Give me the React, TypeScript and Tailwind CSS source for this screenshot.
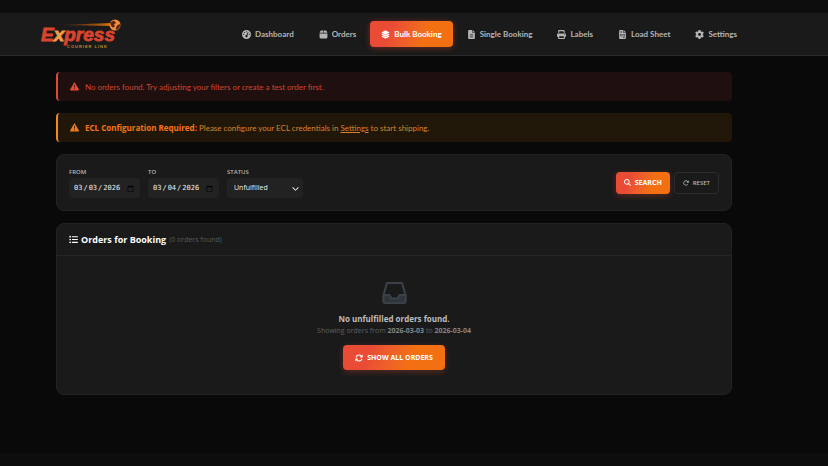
import React, { useState } from 'react';
import {
    FaGaugeHigh, FaBox, FaLayerGroup, FaFileLines, FaPrint, FaFileInvoice, FaGear, FaTriangleExclamation,
    FaMagnifyingGlass, FaRotateRight, FaListUl, FaArrowsRotate, FaChevronDown
} from 'react-icons/fa6';

const navItems = [
    { label: 'Dashboard', icon: FaGaugeHigh },
    { label: 'Orders', icon: FaBox },
    { label: 'Bulk Booking', icon: FaLayerGroup },
    { label: 'Single Booking', icon: FaFileLines },
    { label: 'Labels', icon: FaPrint },
    { label: 'Load Sheet', icon: FaFileInvoice },
    { label: 'Settings', icon: FaGear },
];

const Logo: React.FC = () => (
    <svg width="84" height="32" viewBox="0 0 84 32" role="img" aria-label="Express Courier Link">
        <defs>
            <linearGradient id="trail" x1="0" x2="1" y1="0" y2="0">
                <stop offset="0" stopColor="#c2410c" stopOpacity="0" />
                <stop offset="1" stopColor="#d97706" />
            </linearGradient>
        </defs>
        <path d="M16 7 L72 5 L72 8 Z" fill="url(#trail)" />
        <text x="1" y="23" fontSize="19" fontWeight="700" fontStyle="italic" fill="#d9442e" stroke="#d9442e" strokeWidth="0.8" fontFamily="'Liberation Sans', sans-serif">
            E<tspan fill="#f59a45" stroke="#f59a45">x</tspan>press
        </text>
        <circle cx="75" cy="7" r="5.5" fill="#f08c3a" />
        <path d="M70 4.5 L74 2.5 L76 5 L74 6.5 L75 8.5 L72.5 9.5 L71 7.5 Z M77.5 7 L80.5 6 L79.5 9.5 L77 12 L75.5 10.5 Z" fill="#5a2410" />
        <text x="27" y="30" fontSize="4" fontWeight="700" letterSpacing="1" fill="#c98a2b" fontFamily="'Liberation Sans', sans-serif">COURIER LINK</text>
    </svg>
);

const EmptyTray: React.FC = () => (
    <svg width="25" height="25" viewBox="0 0 25 25" fill="none" stroke="#3b4148" strokeWidth="2" strokeLinejoin="round" aria-hidden="true">
        <path d="M5 3 H20 L23.5 15 V21 Q23.5 23 21.5 23 H3.5 Q1.5 23 1.5 21 V15 Z" />
        <path d="M1.5 15 H7.5 L9.5 18.5 H15.5 L17.5 15 H23.5 V21 Q23.5 23 21.5 23 H3.5 Q1.5 23 1.5 21 Z" fill="#30353b" />
    </svg>
);

const dateInput = "h-5 w-full px-1 rounded bg-[#222] text-[7px] font-normal text-[#eee] font-['DejaVu_Sans_Mono',monospace]";
const fieldLabel = 'flex flex-col gap-px text-[6px] leading-[10px] font-semibold';
const orange = 'bg-linear-110 from-[#e94b35] from-25% to-[#f37012] to-65% text-white';

const App: React.FC = () => {
    const [from, setFrom] = useState('2026-03-03');
    const [to, setTo] = useState('2026-03-04');
    const [status, setStatus] = useState('Unfulfilled');

    const reset = () => {
        setFrom('2026-03-03');
        setTo('2026-03-04');
        setStatus('Unfulfilled');
    };

    return (
        <div className="min-h-screen flex flex-col bg-[#090909] text-[8px] leading-3 text-[#b5b5b5] font-['Open_Sans','Noto_Sans',sans-serif]">
            <div className="h-[13px] bg-[#0d0d0d]" />

            <header className="bg-[#1a1a1a] border-b border-[#2a2a2a] pl-10 pr-20 h-[43px] flex items-center justify-between">
                <a href="#" className="block"><Logo /></a>
                <nav className="flex items-center gap-[3px] font-['Lato','Open_Sans',sans-serif]">
                    {navItems.map(({ label, icon: Icon }) => (
                        <a
                            key={label}
                            href="#"
                            className={`flex items-center gap-1 h-[26px] px-[11px] rounded whitespace-nowrap font-bold ${
                                label === 'Bulk Booking'
                                    ? `${orange} shadow-[0_1px_6px_rgba(233,75,53,0.4)]`
                                    : 'text-[#b5b5b5]'
                            }`}
                        >
                            <Icon size={9} />
                            {label}
                        </a>
                    ))}
                </nav>
            </header>

            <main className="flex-1 pl-14 pr-24 pt-4 pb-14 flex flex-col gap-3">
                <div role="alert" className="flex items-center gap-1.5 h-[29px] px-3 rounded border-l-2 border-[#e04a35] bg-[#1f0f0e] text-[#d0462f] font-['Lato',sans-serif]">
                    <FaTriangleExclamation size={9} className="text-[#e94b35]" />
                    <span>No orders found. Try adjusting your filters or create a test order first.</span>
                </div>
                <div role="alert" className="flex items-center gap-1.5 h-[29px] px-3 rounded border-l-2 border-[#f08a24] bg-[#211709] text-[#d9822b] font-['Lato',sans-serif]">
                    <FaTriangleExclamation size={9} className="text-[#f07a1c]" />
                    <span>
                        <strong className="text-[#f97316] font-['Open_Sans',sans-serif]">ECL Configuration Required:</strong> Please configure your ECL credentials in <a href="#" className="underline">Settings</a> to start shipping.
                    </span>
                </div>

                {/* Filters */}
                <form className="flex items-center justify-between h-[57px] px-3 rounded-lg bg-[#1a1a1a] border border-[#222]" onSubmit={e => e.preventDefault()}>
                    <div className="flex gap-2">
                        <label className={`${fieldLabel} w-[71px]`}>
                            FROM
                            <input type="date" value={from} onChange={e => setFrom(e.target.value)} className={dateInput} />
                        </label>
                        <label className={`${fieldLabel} w-[71px]`}>
                            TO
                            <input type="date" value={to} onChange={e => setTo(e.target.value)} className={dateInput} />
                        </label>
                        <label className={`${fieldLabel} w-[76px]`}>
                            STATUS
                            <span className="relative block">
                                <select value={status} onChange={e => setStatus(e.target.value)} className="appearance-none block h-5 w-full pl-[7px] rounded bg-[#222] text-[7px] font-normal text-[#eee]">
                                    <option>Unfulfilled</option>
                                    <option>Fulfilled</option>
                                </select>
                                <FaChevronDown size={7} className="absolute right-1 top-[7px] text-white pointer-events-none" />
                            </span>
                        </label>
                    </div>
                    <div className="flex items-center gap-1">
                        <button type="submit" className={`flex items-center gap-1 h-[22px] px-2 rounded text-[7px] font-bold shadow-[0_2px_6px_rgba(233,75,53,0.3)] ${orange}`}>
                            <FaMagnifyingGlass size={7} />
                            SEARCH
                        </button>
                        <button type="button" onClick={reset} className="flex items-center gap-1 h-[22px] px-2 rounded border border-[#2c2c2c] text-[6px] font-semibold">
                            <FaRotateRight size={6} />
                            RESET
                        </button>
                    </div>
                </form>

                {/* Orders */}
                <section className="rounded-lg bg-[#1a1a1a] border border-[#222]">
                    <div className="flex items-center gap-[3px] h-8 px-3 border-b border-[#262626]">
                        <FaListUl size={9} className="text-white" />
                        <h2 className="text-[9px] font-bold text-white">Orders for Booking</h2>
                        <span className="text-[7px] text-[#555a61]">(0 orders found)</span>
                    </div>
                    <div className="flex flex-col items-center py-6">
                        <EmptyTray />
                        <p className="mt-2 font-bold text-[#bdbdbd]">No unfulfilled orders found.</p>
                        <p className="text-[7px] text-[#5a6068]">
                            Showing orders from <strong className="text-[#858585]">2026-03-03</strong> to <strong className="text-[#858585]">2026-03-04</strong>
                        </p>
                        <button type="button" className={`mt-2 flex items-center gap-1 h-[25px] px-3 rounded text-[7px] font-bold shadow-[0_2px_6px_rgba(233,75,53,0.3)] ${orange}`}>
                            <FaArrowsRotate size={8} />
                            SHOW ALL ORDERS
                        </button>
                    </div>
                </section>
            </main>

            <div className="h-[13px] bg-[#0d0d0d]" />
        </div>
    );
};

export default App;
